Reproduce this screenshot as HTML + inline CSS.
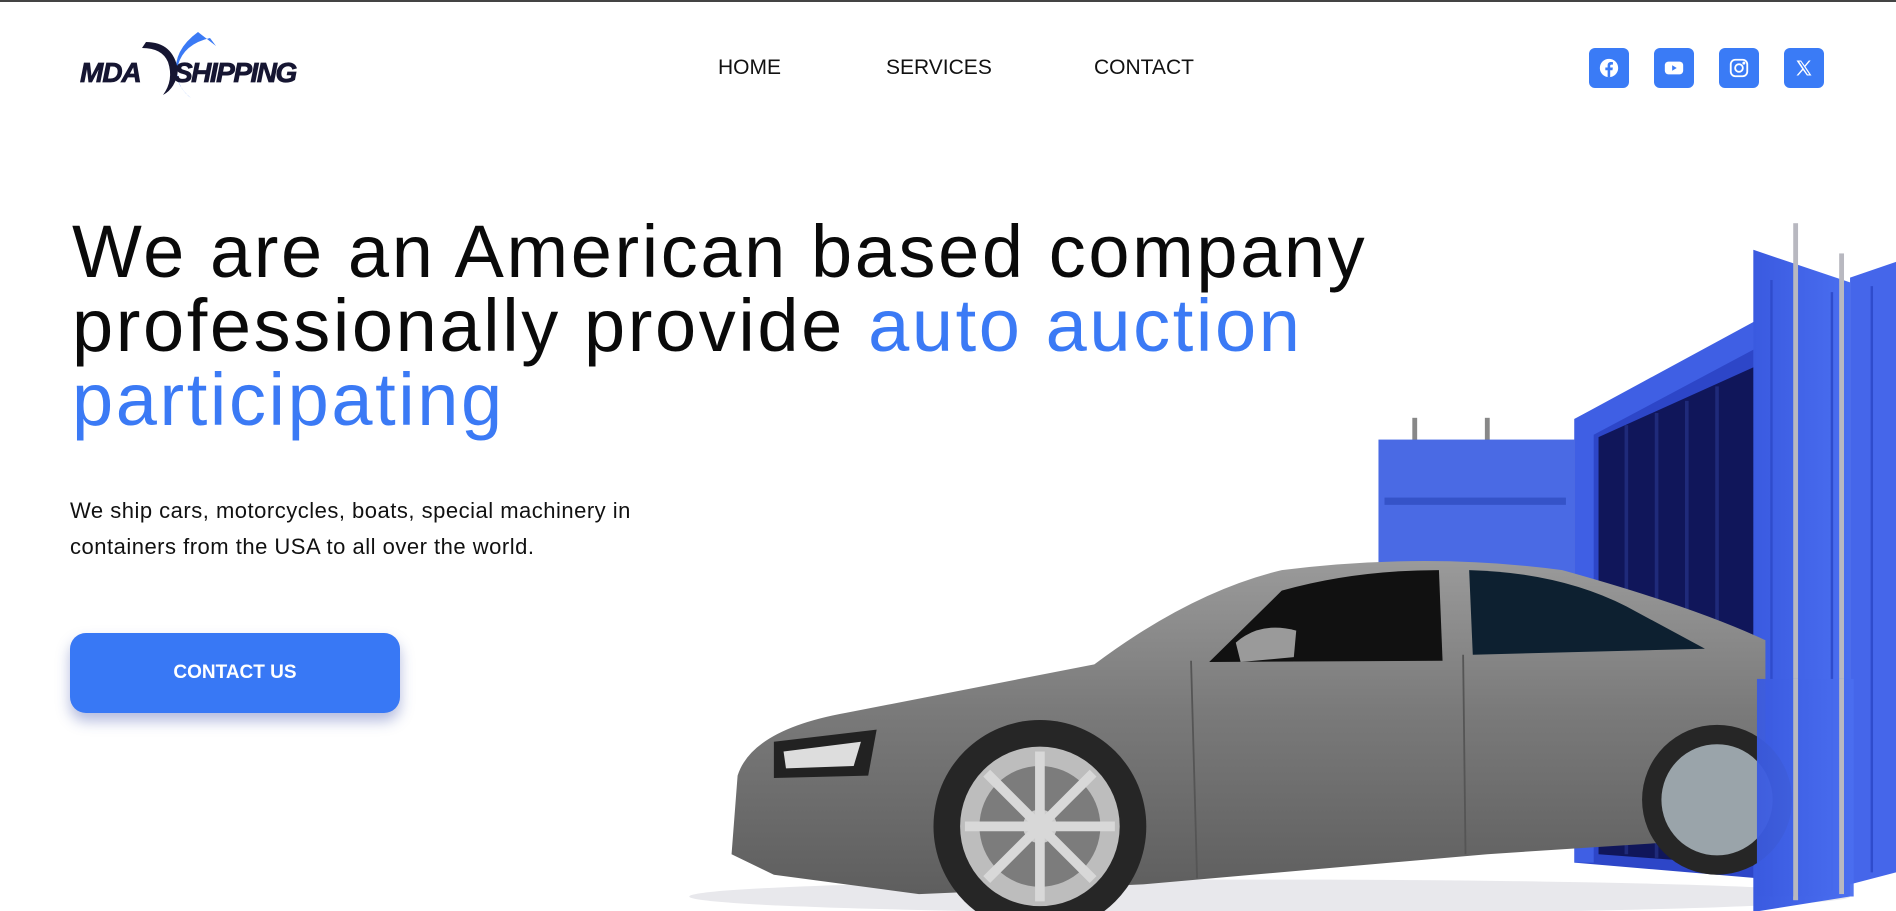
<!DOCTYPE html>
<html><head><meta charset="utf-8"><style>
*{margin:0;padding:0;box-sizing:border-box}
body{width:1896px;height:909px;overflow:hidden;background:#fff;font-family:"Liberation Sans",sans-serif;position:relative;border-top:2px solid #444}
.abs{position:absolute}
.nav a{position:absolute;top:54px;font-size:21px;line-height:24px;color:#111;text-decoration:none}
.soc{position:absolute;top:46px;width:40px;height:40px;border-radius:6px;background:#3a7bf6;display:flex;align-items:center;justify-content:center}
h1{position:absolute;left:72px;top:213px;font-size:74px;line-height:74px;font-weight:400;letter-spacing:2.6px;color:#0a0a0a;width:1420px}
h1 span{color:#3b7af5}
p.d{position:absolute;left:70px;top:491px;font-size:22px;line-height:36px;color:#111;width:660px;letter-spacing:0.5px}
.btn{position:absolute;left:70px;top:631px;width:330px;height:80px;border-radius:16px;background:#3878f5;color:#fff;font-weight:700;font-size:19px;display:flex;align-items:center;justify-content:center;box-shadow:0 8px 14px rgba(40,60,160,.35)}
</style></head><body>
<svg class="abs" style="left:78px;top:28px" width="245" height="72" viewBox="0 0 245 72">
<path d="M120 2 Q95 20 98 45 Q102 60 113 68 Q96 55 100 35 Q106 14 132 8 L138 16 Z" fill="#3b7af5"/>
<path d="M68 12 Q95 12 100 40 Q98 58 85 65 Q96 50 90 32 Q84 18 64 18 Z" fill="#161632"/>
<text x="2" y="52" font-family="Liberation Sans" font-weight="700" font-style="italic" font-size="28" fill="#161632" letter-spacing="-1" stroke="#161632" stroke-width="0.8">MDA</text>
<text x="96" y="52" font-family="Liberation Sans" font-weight="700" font-style="italic" font-size="28" fill="#161632" letter-spacing="-1.5" stroke="#161632" stroke-width="0.8">SHIPPING</text>
</svg>
<div class="nav"><a style="left:718px">HOME</a><a style="left:886px">SERVICES</a><a style="left:1094px">CONTACT</a></div>
<div class="soc" style="left:1589px"><svg width="22" height="22" viewBox="0 0 24 24"><circle cx="12" cy="12" r="10" fill="#fff"/><path d="M13.3 22V14.5h2.5l.4-3h-2.9V9.7c0-.9.3-1.4 1.5-1.4h1.5V5.6c-.3 0-1.2-.1-2.200-.1-2.2 0-3.6 1.3-3.6 3.7v2.3H8v3h2.5V22z" fill="#3a7bf6"/></svg></div>
<div class="soc" style="left:1654px"><svg width="22" height="22" viewBox="0 0 24 24"><rect x="2" y="5" width="20" height="14" rx="4" fill="#fff"/><path d="M10 9l5 3-5 3z" fill="#3a7bf6"/></svg></div>
<div class="soc" style="left:1719px"><svg width="22" height="22" viewBox="0 0 24 24" fill="none" stroke="#fff" stroke-width="2"><rect x="3" y="3" width="18" height="18" rx="5"/><circle cx="12" cy="12" r="4.2"/><circle cx="17.3" cy="6.7" r=".6" fill="#fff"/></svg></div>
<div class="soc" style="left:1784px"><svg width="20" height="20" viewBox="0 0 24 24"><path d="M3 3h5.5l4.3 6 5-6h2.2l-6.2 7.3L21 21h-5.5l-4.7-6.5L5.2 21H3l6.8-7.9z M6.2 4.3l10.2 15.4h1.9L8 4.3z" fill="#fff" fill-rule="evenodd"/></svg></div>
<h1>We are an American based company professionally provide <span>auto auction participating</span></h1>
<p class="d">We ship cars, motorcycles, boats, special machinery in containers from the USA to all over the world.</p>
<div class="btn">CONTACT US</div>
<svg class="abs" style="left:0;top:0" width="1896" height="909" viewBox="0 0 1568 752" preserveAspectRatio="none">
<defs>
<linearGradient id="cg" x1="0" y1="0" x2="0" y2="1"><stop offset="0" stop-color="#9a9a9a"/><stop offset=".45" stop-color="#7a7a7a"/><stop offset="1" stop-color="#5e5e5e"/></linearGradient>
<linearGradient id="bl" x1="0" y1="0" x2="1" y2="0"><stop offset="0" stop-color="#3a5ae0"/><stop offset="1" stop-color="#4a6ef0"/></linearGradient>
</defs>
<ellipse cx="1050" cy="740" rx="480" ry="14" fill="#e8e8ec"/>
<rect x="1168" y="344" width="4" height="20" fill="#888"/><rect x="1228" y="344" width="4" height="20" fill="#888"/>
<rect x="1140" y="362" width="162" height="112" fill="#4a6ae4"/>
<rect x="1145" y="410" width="150" height="6" fill="#3553c8"/>
<polygon points="1302,345 1455,265 1455,725 1302,712" fill="#2d46c8"/>
<polygon points="1322,360 1455,300 1455,715 1322,705" fill="#10165a"/>
<g stroke="#1f2a7a" stroke-width="3"><line x1="1345" y1="350" x2="1345" y2="705"/><line x1="1370" y1="340" x2="1370" y2="708"/><line x1="1395" y1="330" x2="1395" y2="710"/><line x1="1420" y1="318" x2="1420" y2="712"/></g>
<polygon points="1302,345 1455,262 1455,285 1318,358 1318,712 1302,712" fill="#3f5fe4"/>
<polygon points="1450,205 1530,232 1530,740 1455,752 1450,752" fill="url(#bl)"/>
<polygon points="1530,228 1568,215 1568,720 1530,730" fill="#4566ea"/>
<g stroke="#2f4ccc" stroke-width="2"><line x1="1465" y1="230" x2="1465" y2="740"/><line x1="1515" y1="240" x2="1515" y2="735"/><line x1="1548" y1="235" x2="1548" y2="720"/></g>
<rect x="1483" y="183" width="4" height="560" fill="#b8b8c0"/><rect x="1521" y="208" width="4" height="530" fill="#b8b8c0"/>
<path d="M605,705 L610,640 Q622,602 700,588 L905,548 Q985,488 1060,470 Q1180,455 1292,470 Q1400,500 1460,528 L1460,690 L1230,705 L945,730 L760,738 L640,722 Z" fill="url(#cg)"/>
<path d="M1000,546 L1060,487 Q1120,470 1190,470 L1193,545 Z" fill="#111"/>
<path d="M1215,470 Q1290,472 1345,500 L1410,535 L1218,540 Z" fill="#0d2030"/>
<path d="M1022,530 q20,-18 50,-10 l-2,22 -44,4z" fill="#9a9a9a"/>
<path d="M640,612 L725,602 L718,640 L640,642 Z" fill="#222"/><path d="M648,620 L712,612 L706,632 L650,634 Z" fill="#ddd"/>
<line x1="985" y1="545" x2="990" y2="725" stroke="#555" stroke-width="1.5"/>
<line x1="1210" y1="540" x2="1212" y2="705" stroke="#555" stroke-width="1.5"/>
<circle cx="860" cy="682" r="88" fill="#262626"/><circle cx="860" cy="682" r="66" fill="#bdbdbd"/><circle cx="860" cy="682" r="50" fill="#7c7c7c"/><circle cx="860" cy="682" r="14" fill="#ccc"/>
<g stroke="#d8d8d8" stroke-width="8"><line x1="860" y1="620" x2="860" y2="744"/><line x1="798" y1="682" x2="922" y2="682"/><line x1="816" y1="638" x2="904" y2="726"/><line x1="904" y1="638" x2="816" y2="726"/></g>
<circle cx="1420" cy="660" r="62" fill="#262626"/><circle cx="1420" cy="660" r="46" fill="#9aa4aa"/>
<rect x="1453" y="560" width="80" height="180" fill="url(#bl)" opacity=".95"/>
<rect x="1483" y="560" width="4" height="183" fill="#b8b8c0"/><rect x="1521" y="560" width="4" height="178" fill="#b8b8c0"/>
</svg>
</body></html>
